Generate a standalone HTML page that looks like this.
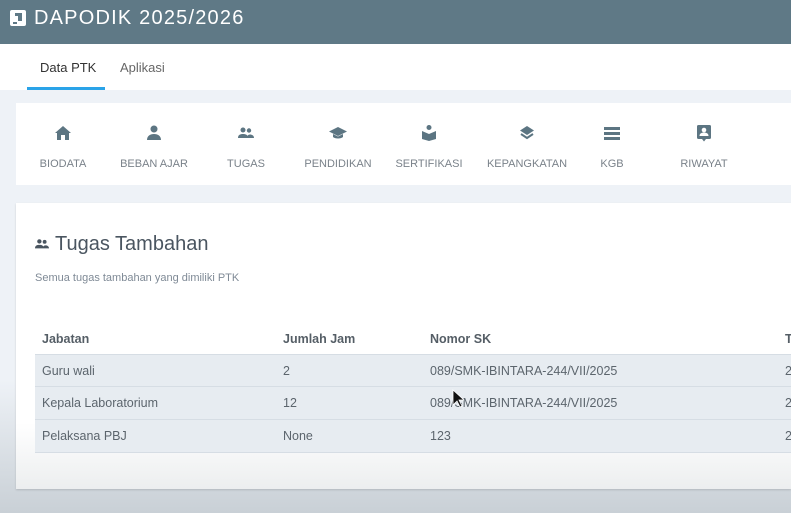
<!DOCTYPE html>
<html><head><meta charset="utf-8"><style>
*{margin:0;padding:0;box-sizing:border-box}
body{width:791px;height:513px;overflow:hidden;position:relative;font-family:"Liberation Sans",sans-serif;background:linear-gradient(#eef2f7 0,#eef2f7 380px,#c9d0d6 513px)}
.hdr{position:absolute;left:0;top:0;width:791px;height:44px;background:#5f7986;box-shadow:0 2px 4px rgba(0,0,0,.25)}
.hdr .t{position:absolute;left:34px;top:7px;color:#fff;font-size:20px;letter-spacing:1.2px}
.tabs{position:absolute;left:0;top:44px;width:791px;height:46px;background:#fff}
.tab{position:absolute;top:16px;font-size:13px}
.ul{position:absolute;left:27px;top:87px;width:78px;height:3px;background:#2aa3e8}
.card1{position:absolute;left:16px;top:103px;width:775px;height:82px;background:#fff}
.it{position:absolute;top:0;width:100px;margin-left:-50px;text-align:center}
.it svg{position:absolute;left:41px;top:21px}
.it span{position:absolute;left:0;width:100px;top:55px;font-size:11px;color:#7a828a}
.card2{position:absolute;left:16px;top:203px;width:775px;height:286px;background:linear-gradient(#fff 0,#fff 220px,#eceeef 286px);box-shadow:0 1px 2px rgba(0,0,0,.15)}
h2{position:absolute;left:55px;top:233px;font-weight:normal;font-size:20px;color:#4a5560}
.sub{position:absolute;left:35px;top:272px;font-size:11px;color:#7f8a96}
.th{position:absolute;top:332px;font-size:12.5px;font-weight:bold;color:#555e66}
.row{position:absolute;left:35px;width:756px;height:33px;background:#e7ecf1;border-bottom:1px solid #d6dde4}
.row div{position:absolute;top:9px;font-size:12.5px;color:#5c656d}
</style></head><body>
<div class="hdr">
<svg style="position:absolute;left:9px;top:9px" width="18" height="18" viewBox="0 0 18 18"><rect x="1" y="1" width="16" height="16" rx="2" fill="#fff"/><path d="M6 4h7v8h-4v-5h-3z M4 13h4v2H4z" fill="#5f7986"/></svg>
<div class="t">DAPODIK 2025/2026</div></div>
<div class="tabs"><div class="tab" style="left:40px;color:#333">Data PTK</div><div class="tab" style="left:120px;color:#666">Aplikasi</div></div>
<div class="ul"></div>
<div class="card1">
<div class="it" style="left:47px"><svg width="18" height="18" viewBox="0 0 18 18"><path d="M9 2L1 9h2v7h4v-5h4v5h4V9h2z" fill="#5c7582"/></svg><span>BIODATA</span></div>
<div class="it" style="left:138px"><svg width="18" height="18" viewBox="0 0 18 18"><circle cx="9" cy="5" r="3.5" fill="#5c7582"/><path d="M2 16c0-4 3-6 7-6s7 2 7 6z" fill="#5c7582"/></svg><span>BEBAN AJAR</span></div>
<div class="it" style="left:230px"><svg width="18" height="18" viewBox="0 0 18 18"><circle cx="6" cy="6" r="2.5" fill="#5c7582"/><circle cx="12" cy="6.5" r="2.2" fill="#5c7582"/><path d="M1 14c0-3 2-4 5-4s5 1 5 4zM10 14c0-2 1-3.5 3-3.5s4 1 4 3.5z" fill="#5c7582"/></svg><span>TUGAS</span></div>
<div class="it" style="left:322px"><svg width="18" height="18" viewBox="0 0 18 18"><path d="M9 3L0 7.5 9 12l9-4.5zM4 10v3c2 2 8 2 10 0v-3l-5 2.5z" fill="#5c7582"/></svg><span>PENDIDIKAN</span></div>
<div class="it" style="left:413px"><svg width="18" height="18" viewBox="0 0 18 18"><circle cx="9" cy="3.5" r="2.5" fill="#5c7582"/><path d="M2 7l7 3 7-3v8l-7 2-7-2z" fill="#5c7582"/></svg><span>SERTIFIKASI</span></div>
<div class="it" style="left:511px"><svg width="18" height="18" viewBox="0 0 18 18"><path d="M9 2l7 4.5-7 4.5-7-4.5z" fill="#5c7582"/><path d="M3 10l6 4 6-4" stroke="#5c7582" stroke-width="2" fill="none"/></svg><span>KEPANGKATAN</span></div>
<div class="it" style="left:596px"><svg width="18" height="18" viewBox="0 0 18 18"><rect x="1" y="3" width="16" height="3" fill="#5c7582"/><rect x="1" y="8" width="16" height="3" fill="#5c7582"/><rect x="1" y="13" width="16" height="3" fill="#5c7582"/></svg><span>KGB</span></div>
<div class="it" style="left:688px"><svg width="18" height="18" viewBox="0 0 18 18"><rect x="2" y="1" width="14" height="14" rx="1.5" fill="#5c7582"/><path d="M7 15h4l-2 2.5z" fill="#5c7582"/><circle cx="9" cy="6" r="2.3" fill="#fff"/><path d="M4.5 12c0-2.5 2-3.5 4.5-3.5s4.5 1 4.5 3.5z" fill="#fff"/></svg><span>RIWAYAT</span></div>
</div>
<div class="card2"></div>
<svg style="position:absolute;left:34px;top:237px" width="16" height="14" viewBox="0 0 18 16"><circle cx="6" cy="5" r="2.5" fill="#4a5560"/><circle cx="12" cy="5.5" r="2.2" fill="#4a5560"/><path d="M1 13c0-3 2-4 5-4s5 1 5 4zM10 13c0-2 1-3.5 3-3.5s4 1 4 3.5z" fill="#4a5560"/></svg>
<h2>Tugas Tambahan</h2>
<div class="sub">Semua tugas tambahan yang dimiliki PTK</div>
<div class="th" style="left:42px">Jabatan</div><div class="th" style="left:283px">Jumlah Jam</div><div class="th" style="left:430px">Nomor SK</div><div class="th" style="left:785px">T</div>
<div class="row" style="top:354px;border-top:1px solid #d6dde4"><div style="left:7px">Guru wali</div><div style="left:248px">2</div><div style="left:395px">089/SMK-IBINTARA-244/VII/2025</div><div style="left:750px">2</div></div>
<div class="row" style="top:387px"><div style="left:7px">Kepala Laboratorium</div><div style="left:248px">12</div><div style="left:395px">089/SMK-IBINTARA-244/VII/2025</div><div style="left:750px">2</div></div>
<div class="row" style="top:420px"><div style="left:7px">Pelaksana PBJ</div><div style="left:248px">None</div><div style="left:395px">123</div><div style="left:750px">2</div></div>
<svg style="position:absolute;left:452px;top:389px" width="12" height="20" viewBox="0 0 12 20"><path d="M1 1v15l4-4 3 6 2-1-3-6h5z" fill="#111" stroke="#fff" stroke-width=".8"/></svg>
</body></html>
